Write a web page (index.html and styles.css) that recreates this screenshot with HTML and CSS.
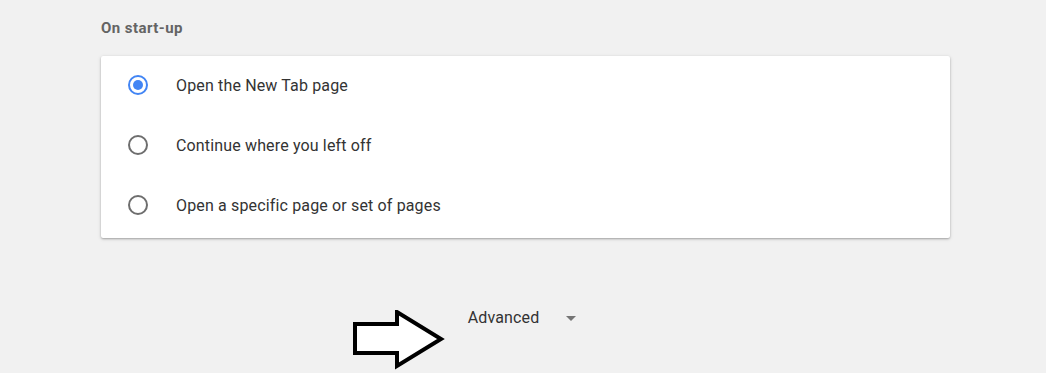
FILE: index.html
```html
<!DOCTYPE html>
<html>
<head>
<meta charset="utf-8">
<link rel="stylesheet" href="styles.css">
</head>
<body>
<div class="page">
  <div class="section">
    <div class="section-title">On start-up</div>
    <div class="card">
      <div class="row">
        <span class="radio checked"></span>
        <span class="label">Open the New Tab page</span>
      </div>
      <div class="row">
        <span class="radio"></span>
        <span class="label">Continue where you left off</span>
      </div>
      <div class="row">
        <span class="radio"></span>
        <span class="label">Open a specific page or set of pages</span>
      </div>
    </div>
  </div>
  <div class="advanced">
    <span class="adv-text">Advanced</span>
    <span class="caret"></span>
    <svg class="arrow" width="92" height="60" viewBox="0 0 92 60">
      <polygon points="2,14 44,14 44,2 88,29 44,56 44,43 2,43" fill="#fff" stroke="#000" stroke-width="4" stroke-linejoin="miter"/>
    </svg>
  </div>
</div>
</body>
</html>
```
FILE: styles.css
```css
html, body {
  margin: 0;
  padding: 0;
  background: #f1f1f1;
  font-family: Roboto, "Liberation Sans", sans-serif;
}
.page {
  width: 1046px;
  height: 373px;
  overflow: hidden;
}
.section {
  padding-left: 101px;
  width: 849px;
}
.section-title {
  height: 56px;
  display: flex;
  align-items: center;
  font-size: 15px;
  font-weight: 700;
  letter-spacing: 0.45px;
  color: #646464;
  padding-bottom: 1px;
  box-sizing: border-box;
}
.card {
  background: #fff;
  border-radius: 2px;
  box-shadow: 0 1px 2px rgba(0,0,0,0.25), 0 1px 4px rgba(0,0,0,0.12);
  padding-bottom: 2px;
}
.row {
  height: 60px;
  box-sizing: border-box;
  padding-bottom: 2px;
  display: flex;
  align-items: center;
  padding-left: 27px;
}
.radio {
  width: 16px;
  height: 16px;
  border: 2px solid #6e6e6e;
  border-radius: 50%;
  box-sizing: content-box;
  position: relative;
  flex: none;
}
.radio.checked {
  border-color: #4285f4;
}
.radio.checked::after {
  content: "";
  position: absolute;
  left: 3px;
  top: 3px;
  width: 10px;
  height: 10px;
  border-radius: 50%;
  background: #4285f4;
}
.label {
  margin-left: 28px;
  font-size: 16px;
  letter-spacing: 0.15px;
  color: #333;
}
.advanced {
  margin-top: 55px;
  height: 48px;
  display: flex;
  align-items: center;
  justify-content: center;
  position: relative;
}
.adv-text {
  font-size: 16px;
  letter-spacing: 0.15px;
  color: #333;
  margin-left: -2px;
}
.caret {
  margin-left: 27px;
  width: 0;
  height: 0;
  border-left: 5px solid transparent;
  border-right: 5px solid transparent;
  border-top: 5px solid #757575;
  margin-top: 2px;
}
.arrow {
  position: absolute;
  left: 353px;
  top: 17px;
}
```
